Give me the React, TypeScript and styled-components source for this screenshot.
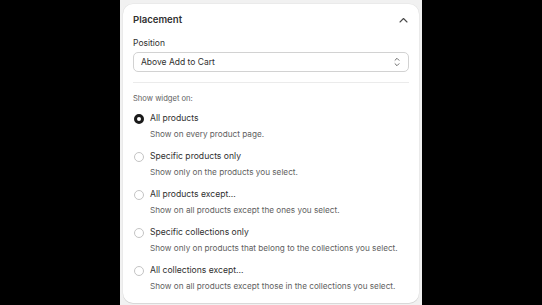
import React, { useState } from "react";
import styled, { createGlobalStyle } from "styled-components";

const Global = createGlobalStyle`
  html, body { margin: 0; padding: 0; background: #000; }
  body { font-family: Inter, "Noto Sans", sans-serif; -webkit-font-smoothing: antialiased; }
  * { box-sizing: border-box; }
`;

const Page = styled.div`
  width: 542px;
  height: 305px;
  display: flex;
  justify-content: center;
  overflow: hidden;
`;

const Column = styled.div`
  width: 302px;
  height: 305px;
  background: #f1f1f1;
  padding: 4px 3px 0;
`;

const Card = styled.section`
  background: #fff;
  border-radius: 10px;
  box-shadow: 0 1px 0 rgba(26, 26, 26, 0.08), 0 0 0 0.5px rgba(0, 0, 0, 0.06);
  padding: 10px 10px 12px;
  display: flex;
  flex-direction: column;
`;

const Header = styled.div`
  display: flex;
  align-items: center;
  justify-content: space-between;
  height: 12px;
`;

const Title = styled.h2`
  margin: 0;
  font-size: 9.6px;
  line-height: 12px;
  font-weight: 600;
  color: #303030;
`;

const IconButton = styled.button`
  border: 0;
  background: none;
  padding: 0;
  margin-right: 1px;
  display: flex;
  align-items: center;
  justify-content: center;
  width: 9px;
  height: 9px;
  cursor: pointer;
`;

const FieldLabel = styled.label`
  margin-top: 11.7px;
  font-size: 8.5px;
  line-height: 11px;
  color: #303030;
`;

const SelectBox = styled.div`
  margin-top: 3.6px;
  height: 20px;
  border: 1px solid #d2d2d2;
  border-radius: 5px;
  background: #fff;
  display: flex;
  align-items: center;
  justify-content: space-between;
  padding: 0 8px 0 7px;
  font-size: 8.5px;
  color: #303030;
`;

const Divider = styled.hr`
  margin: 10px 0 0;
  border: 0;
  border-top: 1px solid #ebebeb;
`;

const SectionLabel = styled.div`
  margin-top: 10.3px;
  font-size: 7.6px;
  line-height: 10px;
  color: #616161;
`;

const Options = styled.div`
  margin-top: 9.6px;
  display: flex;
  flex-direction: column;
  gap: 12px;
`;

const Option = styled.label`
  display: grid;
  grid-template-columns: 11px 1fr;
  column-gap: 6px;
  cursor: pointer;
`;

const Radio = styled.span<{ $checked: boolean }>`
  justify-self: end;
  margin-top: 1px;
  width: 10px;
  height: 10px;
  border-radius: 50%;
  background: #fff;
  border: ${(p) => (p.$checked ? "3px solid #1a1a1a" : "1px solid #c4c4c4")};
`;

const OptionText = styled.div`
  display: flex;
  flex-direction: column;
`;

const OptionLabel = styled.span`
  font-size: 8.6px;
  line-height: 11px;
  color: #303030;
`;

const OptionDesc = styled.span`
  margin-top: 5px;
  font-size: 8.2px;
  line-height: 10px;
  color: #616161;
`;

const ChevronUp = () => (
  <svg width="9" height="6" viewBox="0 0 9 6" fill="none">
    <path d="M1 5 L4.5 1.5 L8 5" stroke="#4a4a4a" strokeWidth="1.1" strokeLinecap="round" strokeLinejoin="round" />
  </svg>
);

const SelectIcon = () => (
  <svg width="6" height="10" viewBox="0 0 6 10" fill="none">
    <path d="M1 3.3 L3 1.3 L5 3.3" stroke="#5c5c5c" strokeWidth="0.9" strokeLinecap="round" strokeLinejoin="round" />
    <path d="M1 6.7 L3 8.7 L5 6.7" stroke="#5c5c5c" strokeWidth="0.9" strokeLinecap="round" strokeLinejoin="round" />
  </svg>
);

const options = [
  { label: "All products", desc: "Show on every product page." },
  { label: "Specific products only", desc: "Show only on the products you select." },
  { label: "All products except...", desc: "Show on all products except the ones you select." },
  { label: "Specific collections only", desc: "Show only on products that belong to the collections you select." },
  { label: "All collections except...", desc: "Show on all products except those in the collections you select." },
];

export default function App() {
  const [selected, setSelected] = useState(0);
  return (
    <Page>
      <Global />
      <Column>
        <Card>
          <Header>
            <Title>Placement</Title>
            <IconButton aria-label="Collapse">
              <ChevronUp />
            </IconButton>
          </Header>
          <FieldLabel>Position</FieldLabel>
          <SelectBox>
            <span>Above Add to Cart</span>
            <SelectIcon />
          </SelectBox>
          <Divider />
          <SectionLabel>Show widget on:</SectionLabel>
          <Options>
            {options.map((o, i) => (
              <Option key={o.label} onClick={() => setSelected(i)}>
                <Radio $checked={selected === i} />
                <OptionText>
                  <OptionLabel>{o.label}</OptionLabel>
                  <OptionDesc>{o.desc}</OptionDesc>
                </OptionText>
              </Option>
            ))}
          </Options>
        </Card>
      </Column>
    </Page>
  );
}
